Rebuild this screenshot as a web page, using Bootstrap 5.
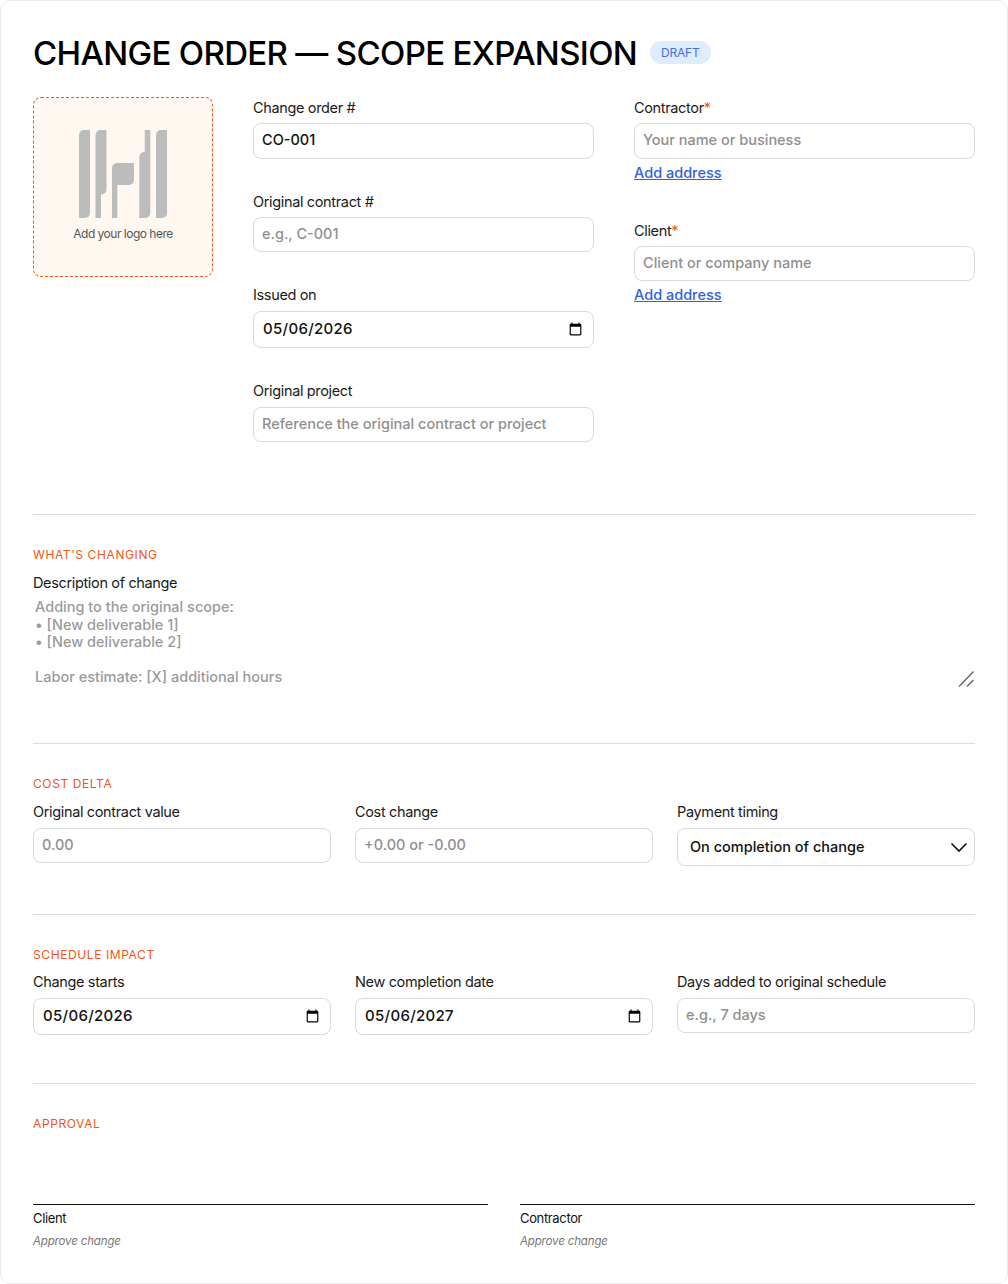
<!DOCTYPE html>
<html lang="en">
<head>
    <meta charset="UTF-8">
    <title>Change Order</title>
    <link href="https://cdn.jsdelivr.net/npm/bootstrap@5.3.2/dist/css/bootstrap.min.css" rel="stylesheet">
    <style>
        body {
            background: #fff;
            font-family: Inter, "Liberation Sans", sans-serif;
            color: #111;
        }
        .sheet {
            height: 1284px;
            padding: 32px;
            border: 1px solid #ececec;
            border-radius: 10px;
        }
        .doc-title {
            font-size: 33px;
            line-height: 40px;
            font-weight: 500;
            letter-spacing: -0.67px;
            color: #000;
            margin: 0 5px 0 0;
        }
        .draft-tag {
            font-size: 12px;
            line-height: 23px;
            padding: 0 11px;
            margin-bottom: 2px;
            color: #3f6fe0;
            background: #dfecfd;
            border-radius: 12px;
            letter-spacing: -0.2px;
        }
        .head-row { margin-bottom: 24px; }
        .top-row { gap: 40px; }
        .logo-box {
            width: 180px;
            height: 180px;
            flex: none;
            background: #fff8f1;
            border: 1px dashed #f0591c;
            border-radius: 8px;
            padding-top: 32px;
            font-size: 12px;
            line-height: 16px;
            letter-spacing: -0.5px;
            color: #555;
        }
        .logo-box svg { display: block; margin-bottom: 8px; }
        .top-col { flex: 1 1 0; min-width: 0; }
        .fld { margin-bottom: 32px; }
        .fld-label {
            display: block;
            font-size: 14.5px;
            line-height: 22px;
            letter-spacing: -0.35px;
            margin-bottom: 4px;
            color: #1a1a1a;
        }
        .fld-label i { color: #f0591c; font-style: normal; }
        .sec-row .fld-label, .fld-label.lbl-far { margin-bottom: 5px; }
        .form-control.fld-input, .form-select.fld-input {
            height: 35px;
            padding: 0 8px 2px;
            font-size: 14.5px;
            font-weight: 500;
            color: #111;
            border: 1px solid #d9d9d9;
            border-radius: 8px;
            box-shadow: none;
        }
        .fld-input::placeholder { color: #8f8f8f; opacity: 1; font-weight: 500; }
        .form-control.h36 { height: 36px; padding-bottom: 3px; }
        .form-control.fld-date {
            height: 37px;
            padding: 0 8px 0 9px;
            font-size: 15px;
            letter-spacing: 0.3px;
        }
        .form-select.fld-input {
            height: 38px;
            padding: 0 12px;
            background-image: url("data:image/svg+xml,%3csvg xmlns='http://www.w3.org/2000/svg' viewBox='0 0 18 11'%3e%3cpath fill='none' stroke='%23111' stroke-width='1.6' d='M1.5 1.5 9 9l7.5-7.5'/%3e%3c/svg%3e");
            background-size: 18px 11px;
            background-position: right 6px center;
        }
        .addr-link {
            display: inline-block;
            font-size: 14.5px;
            line-height: 20px;
            font-weight: 500;
            color: #2f62dc;
            margin-top: 4px;
        }
        .right-gap { margin-bottom: 36px; }
        .rule { height: 1px; background: #dcdcdc; }
        .rule-first { margin-top: 40px; }
        .rule-next { margin-top: 48px; }
        .sec-title {
            font-size: 12px;
            line-height: 16px;
            letter-spacing: 0.6px;
            color: #ee5518;
            text-transform: uppercase;
            margin: 32px 0 9px;
        }
        .sec-title.tight { margin-bottom: 8px; }
        .sec-row { column-gap: 24px; }
        .desc-wrap { position: relative; height: 145px; }
        .desc-area {
            display: block;
            width: 100%;
            height: 100%;
            padding: 0 2px;
            border: 0;
            outline: 0;
            resize: none;
            font-size: 14.5px;
            line-height: 17.5px;
            font-weight: 500;
        }
        .desc-area::placeholder { color: #9a9a9a; opacity: 1; }
        .drag-mark { position: absolute; right: -1px; top: 73px; }
        .sign-row { gap: 32px; margin-top: 72px; }
        .sign-line { border-top: 1px solid #111; padding-top: 4px; }
        .sign-who { font-size: 13px; line-height: 18px; letter-spacing: -0.35px; }
        .sign-note { font-size: 11.5px; line-height: 16px; font-style: italic; color: #777; margin-top: 6px; letter-spacing: -0.15px; }
    </style>
</head>
<body>

<div class="sheet">
    <div class="d-flex align-items-center gap-2 head-row">
        <h1 class="doc-title">CHANGE ORDER — SCOPE EXPANSION</h1>
        <span class="draft-tag">DRAFT</span>
    </div>

    <div class="d-flex top-row">
        <div class="logo-box text-center">
            <svg class="mx-auto" width="88" height="88" viewBox="0 0 88 88" fill="#bcbcbc">
                <path d="M5 0h6v83a5 5 0 0 1-5 5H0V5a5 5 0 0 1 5-5z"/>
                <path d="M21.5 0h6v59a5 5 0 0 1-5.5 5.5V88h-5.5V5a5 5 0 0 1 5-5z"/>
                <path d="M38 33h17v17a5 5 0 0 1-5 5H38.3v33H33V38a5 5 0 0 1 5-5z"/>
                <path d="M65.7 0h5.6v83a5 5 0 0 1-5 5h-6V27a5 5 0 0 1 5.4-5z"/>
                <path d="M82 0h6v83a5 5 0 0 1-5 5h-6V5a5 5 0 0 1 5-5z"/>
            </svg>
            Add your logo here
        </div>

        <div class="top-col">
            <div class="fld">
                <label class="fld-label">Change order #</label>
                <input class="form-control fld-input h36" type="text" value="CO-001">
            </div>
            <div class="fld">
                <label class="fld-label">Original contract #</label>
                <input class="form-control fld-input" type="text" placeholder="e.g., C-001">
            </div>
            <div class="fld">
                <label class="fld-label lbl-far">Issued on</label>
                <input class="form-control fld-input fld-date" type="date" value="2026-05-06">
            </div>
            <div class="fld">
                <label class="fld-label lbl-far">Original project</label>
                <input class="form-control fld-input" type="text" placeholder="Reference the original contract or project">
            </div>
        </div>

        <div class="top-col">
            <div class="right-gap">
                <label class="fld-label">Contractor<i>*</i></label>
                <input class="form-control fld-input h36" type="text" placeholder="Your name or business">
                <a href="#" class="addr-link">Add address</a>
            </div>
            <div>
                <label class="fld-label">Client<i>*</i></label>
                <input class="form-control fld-input" type="text" placeholder="Client or company name">
                <a href="#" class="addr-link">Add address</a>
            </div>
        </div>
    </div>

    <div class="rule rule-first"></div>
    <div class="sec-title">What's changing</div>
    <label class="fld-label">Description of change</label>
    <div class="desc-wrap">
        <textarea class="desc-area" placeholder="Adding to the original scope:
• [New deliverable 1]
• [New deliverable 2]

Labor estimate: [X] additional hours"></textarea>
        <svg class="drag-mark" width="18" height="18" viewBox="0 0 18 18" fill="none" stroke="#666" stroke-width="1.4">
            <path d="M1 15.5 15.5.5M9 15.5 15.5 9"/>
        </svg>
    </div>

    <div class="rule"></div>
    <div class="sec-title">Cost delta</div>
    <div class="row g-0 sec-row">
        <div class="col">
            <label class="fld-label">Original contract value</label>
            <input class="form-control fld-input" type="text" placeholder="0.00">
        </div>
        <div class="col">
            <label class="fld-label">Cost change</label>
            <input class="form-control fld-input" type="text" placeholder="+0.00 or -0.00">
        </div>
        <div class="col">
            <label class="fld-label">Payment timing</label>
            <select class="form-select fld-input"><option>On completion of change</option></select>
        </div>
    </div>

    <div class="rule rule-next"></div>
    <div class="sec-title tight">Schedule impact</div>
    <div class="row g-0 sec-row">
        <div class="col">
            <label class="fld-label">Change starts</label>
            <input class="form-control fld-input fld-date" type="date" value="2026-05-06">
        </div>
        <div class="col">
            <label class="fld-label">New completion date</label>
            <input class="form-control fld-input fld-date" type="date" value="2027-05-06">
        </div>
        <div class="col">
            <label class="fld-label">Days added to original schedule</label>
            <input class="form-control fld-input" type="text" placeholder="e.g., 7 days">
        </div>
    </div>

    <div class="rule rule-next"></div>
    <div class="sec-title">Approval</div>
    <div class="d-flex sign-row">
        <div class="flex-fill sign-line w-50">
            <div class="sign-who">Client</div>
            <div class="sign-note">Approve change</div>
        </div>
        <div class="flex-fill sign-line w-50">
            <div class="sign-who">Contractor</div>
            <div class="sign-note">Approve change</div>
        </div>
    </div>
</div>

<script src="https://cdn.jsdelivr.net/npm/bootstrap@5.3.2/dist/js/bootstrap.bundle.min.js"></script>
</body>
</html>
